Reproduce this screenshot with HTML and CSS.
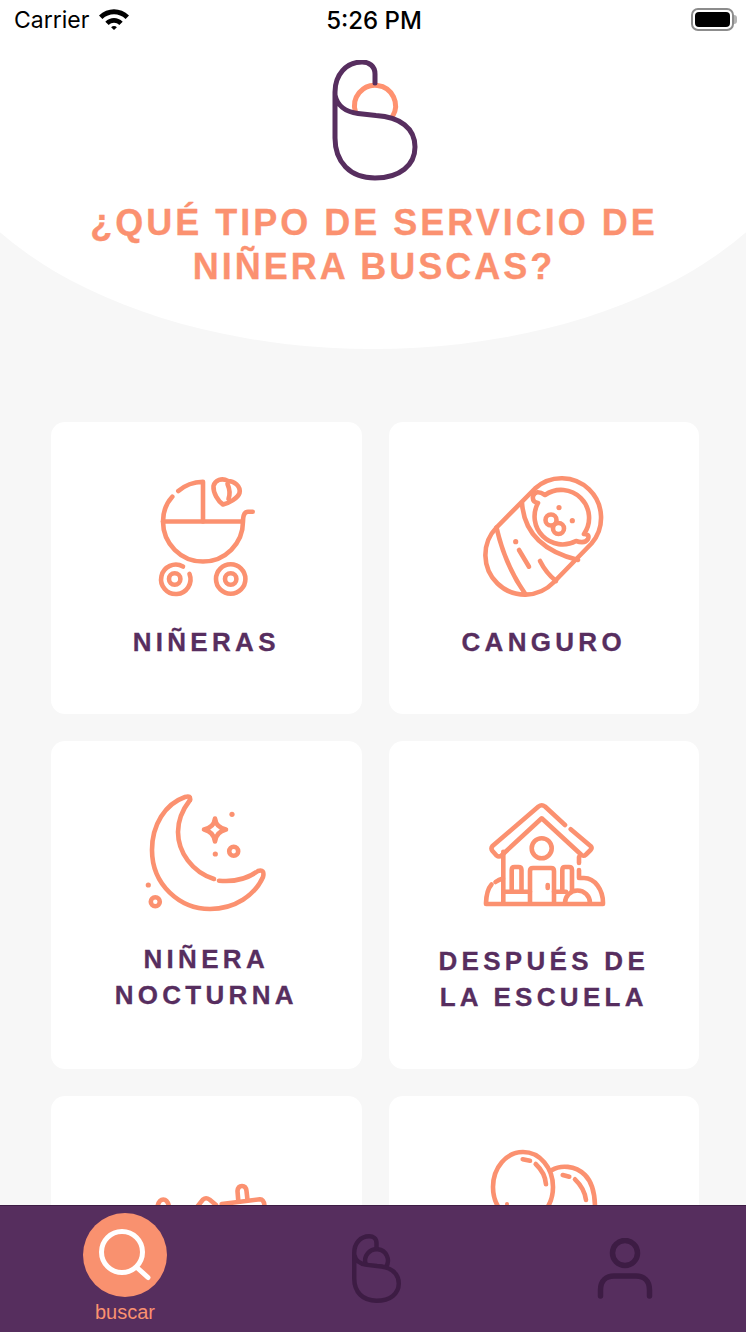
FILE: index.html
```html
<!DOCTYPE html>
<html lang="es">
<head>
<meta charset="utf-8">
<title>Buscar</title>
<link rel="stylesheet" href="styles.css">
</head>
<body>
<div class="page">
  <main class="scroll">
    <header class="hero">
      <div class="status">
        <div class="status-left">
          <span class="carrier">Carrier</span>
          <svg class="wifi" viewBox="0 0 30 22"><path d="M0 7.6C8.500-.8 21.500-.8 30 7.600L26.600 11C19.800 4.800 10.200 4.800 3.400 11Z"/><path d="M6.300 13.700C11.400 8.900 18.600 8.900 23.700 13.700L20.300 17C17.100 14.100 12.900 14.100 9.700 17Z"/><path d="M12.100 19.200C13.900 17.700 16.100 17.700 17.900 19.200L15 22Z"/></svg>
        </div>
        <span class="time">5:26 PM</span>
        <div class="battery"><span class="battery-fill"></span></div>
      </div>
      <svg class="logo" viewBox="318 60 110 121">
        <path class="logo-peach" d="M355.500 112A20.500 20.500 0 1 1 392.500 116.500"/>
        <path class="logo-plum" d="M375 83V74C375 66 369 62 362 62C346 62 335 75 335 92V138C335 162 350 178 375 178C400 178 415 165 415 147C415 128 400 117 376 115.500L358 113.500C345 112 337 105 335 95"/>
      </svg>
      <h1 class="title">¿QUÉ TIPO DE SERVICIO DE<br>NIÑERA BUSCAS?</h1>
    </header>

    <section class="grid">
      <article class="card card-short">
        <svg class="icon" viewBox="141 470 130 130">
          <path d="M163 521.500A40 40 0 0 0 243 521.500M163 521.500H243C243 515 244 511.700 248 511.700H252.700"/>
          <path d="M203 521.500V481.700C192 482 184 486 178.300 491M172.300 496.700C166.500 503 163 512 163 521.500"/>
          <path d="M213.500 486C215 480 222 477.500 228 481C234 481 241 486 239.500 493C238 498 229 503 223 504.500C218 501 213 493 213.500 486Z"/>
          <path d="M227.500 484Q231 492 228.500 499"/>
          <path d="M183 566.500A14.700 14.700 0 1 0 189.500 574"/>
          <circle cx="174.700" cy="579" r="5.700"/>
          <circle cx="230.700" cy="579" r="14.700"/>
          <circle cx="230.700" cy="579" r="5.700"/>
        </svg>
        <h2 class="card-label card-label-low">NIÑERAS</h2>
      </article>
      <article class="card card-short">
        <svg class="icon" viewBox="479 470 130 130">
          <path d="M535 488.500A39.500 39.500 0 0 1 591.500 543.500L553.500 582.500A39.500 39.500 0 0 1 496.500 527.500Z"/>
          <path d="M545 495A28 28 0 0 1 584 534Q590 534 588 539Q585 544 576 541A28 28 0 0 1 538 503Q532 502 533 496Q536 489 545 495Z"/>
          <circle class="dot" cx="559" cy="507.700" r="2.600"/>
          <circle class="dot" cx="572.300" cy="520.700" r="2.600"/>
          <circle cx="551" cy="520" r="5.500"/>
          <circle cx="558.500" cy="528.500" r="5.500"/>
          <path d="M522 503Q525 547 578 560"/>
          <path d="M496.500 527.500Q505 565 525 593.500"/>
          <path d="M540 561Q546 573 556 581"/>
          <circle class="dot" cx="515.700" cy="541.700" r="2.600"/>
          <path d="M519 550L529 566.700"/>
        </svg>
        <h2 class="card-label card-label-low">CANGURO</h2>
      </article>
      <article class="card card-tall">
        <svg class="icon" viewBox="141 789 130 130">
          <path d="M190 800Q191 795 185 797C165 804 152 825 152 850C152 885 180 909 210 909C235 909 255 895 263 877Q265 869 258 871C246 880 233 882 219 880.700"/>
          <path d="M214 879C192 872 178 852 178 832C178 820 183 809 190 800"/>
          <path d="M215 818.500Q216 827.500 226 829.500Q216 832 215 841.500Q214 832 204 829.500Q214 827.500 215 818.500Z"/>
          <circle class="dot" cx="232" cy="814.300" r="2.600"/>
          <circle class="dot" cx="215.300" cy="854" r="2.600"/>
          <circle class="dot" cx="148.300" cy="885" r="2.600"/>
          <circle cx="233.700" cy="851.300" r="4.500"/>
          <circle cx="155.300" cy="901.700" r="4.500"/>
        </svg>
        <h2 class="card-label card-label-high">NIÑERA<br>NOCTURNA</h2>
      </article>
      <article class="card card-tall">
        <svg class="icon" viewBox="479 789 130 130">
          <path d="M565 825L545 806.500Q541.700 804 538.500 806.500L492.500 846Q490.500 848.500 492.500 851L496.500 855.500Q499 857.500 501.500 855.500L541.700 818.300L581 854.500Q583.300 857 586 854.500L590.500 850Q592.500 848 590.500 846L570.700 829.300"/>
          <path d="M503.300 851.700V902M579 857V863M579 870V878"/>
          <circle cx="541.700" cy="848.300" r="10"/>
          <path d="M530 902V871Q530 868 533 868H551Q554 868 554 871V902"/>
          <path d="M547.700 885V888"/>
          <path d="M511.700 891V870Q511.700 867 514.500 867H518.500Q521.500 867 521.500 870V891"/>
          <path d="M562.300 891V870Q562.300 867 565 867H569Q572 867 572 870V891"/>
          <path d="M503.300 891.700H530M554 891.700H566"/>
          <path d="M486 904H603"/>
          <path d="M486 903Q486.500 890 491.500 884.500M495.500 882Q499 879.500 503 878.500"/>
          <path d="M565 903A12.500 12.500 0 0 1 590 903"/>
          <path d="M580 878H584C595 878 603 890 603 903"/>
        </svg>
        <h2 class="card-label card-label-low">DESPUÉS DE<br>LA ESCUELA</h2>
      </article>
      <article class="card card-tall">
        <svg class="icon" viewBox="141 1144 130 130">
          <path d="M157 1210Q158 1199.500 163.300 1199.500Q168.500 1199.500 169.500 1210"/>
          <path d="M197 1207L203 1199.500Q206 1197 209.500 1199.500L216 1205"/>
          <path d="M221.700 1204L260 1199.300Q264 1199.500 264.500 1206"/>
          <path d="M238.300 1201L237.500 1191Q238 1186 242 1186Q246 1186 246.500 1191L247.500 1200"/>
        </svg>
      </article>
      <article class="card card-tall">
        <svg class="icon" viewBox="479 1144 130 130">
          <ellipse cx="523" cy="1187" rx="30" ry="35"/>
          <path d="M552 1170C560 1165 575 1165 585 1175C592 1182 595 1195 595 1208"/>
          <path d="M522.700 1159.300L530 1160.700M535.700 1164C542 1170 545.500 1177 546 1184.300"/>
          <path d="M562.700 1175L569.300 1176.700M575 1179.300C581 1185 585 1192 586 1200"/>
          <circle class="dot" cx="507" cy="1204" r="2"/>
        </svg>
      </article>
    </section>
  </main>

  <nav class="tabbar">
    <div class="tab">
      <div class="tab-badge">
        <svg class="tab-search" viewBox="0 0 84 84"><circle cx="39" cy="39" r="20.500"/><path d="M55 55.500L65 64.500"/></svg>
      </div>
      <span class="tab-label">buscar</span>
    </div>
    <div class="tab">
      <svg class="tab-logo" viewBox="331 58 88 124">
        <path d="M355.500 112A20.500 20.500 0 1 1 392.500 116.500"/>
        <path d="M375 83V74C375 66 369 62 362 62C346 62 335 75 335 92V138C335 162 350 178 375 178C400 178 415 165 415 147C415 128 400 117 376 115.500L358 113.500C345 112 337 105 335 95"/>
      </svg>
    </div>
    <div class="tab">
      <svg class="tab-person" viewBox="0 0 60 64"><circle cx="30" cy="15" r="12.500"/><path d="M5.500 58V52C5.500 42 12 38 19 38H41C48 38 54.500 42 54.500 52V58"/></svg>
    </div>
  </nav>
</div>
</body>
</html>
```
FILE: styles.css
```css
* { box-sizing: border-box; }
html, body { margin: 0; padding: 0; }
body { background: #f7f7f7; font-family: "Liberation Sans", Arial, sans-serif; }

.page {
  width: 746px;
  height: 1332px;
  display: flex;
  flex-direction: column;
  overflow: hidden;
  background: #f7f7f7;
}
.scroll { flex: 1; min-height: 0; overflow: hidden; }

.hero {
  position: relative;
  height: 349px;
  display: flex;
  flex-direction: column;
  align-items: center;
}
.hero::before {
  content: "";
  position: absolute;
  left: -77px;
  bottom: 0;
  width: 900px;
  height: 530px;
  border-radius: 50%;
  background: #fff;
}
.hero > * { position: relative; }

.status {
  width: 100%;
  height: 40px;
  display: grid;
  grid-template-columns: 1fr auto 1fr;
  align-items: center;
  padding: 0 12px 0 14px;
  color: #000;
  font-family: Inter, "Liberation Sans", sans-serif;
}
.status-left { display: flex; align-items: center; gap: 10px; }
.carrier { font-size: 23px; }
.wifi { width: 30px; height: 22px; fill: #000; margin-top: -2px; }
.time { font-size: 24px; font-weight: 500; }
.battery {
  justify-self: end;
  width: 43px;
  height: 23px;
  margin-top: -2px;
  border: 2px solid #8c8c8c;
  border-radius: 7px;
  padding: 2px;
  position: relative;
}
.battery::after {
  content: "";
  position: absolute;
  right: -5px;
  top: 5px;
  width: 3px;
  height: 9px;
  border-radius: 0 3px 3px 0;
  background: #b5b5b5;
}
.battery-fill { display: block; height: 100%; background: #000; border-radius: 4px; }

.logo {
  width: 110px;
  height: 121px;
  margin-top: 20px;
  fill: none;
  stroke-linecap: round;
  stroke-width: 5;
}
.logo-plum { stroke: #572e5f; }
.logo-peach { stroke: #ff9270; }

.title {
  margin: 20px 0 0 2px;
  font-size: 36px;
  line-height: 44px;
  font-weight: 700;
  letter-spacing: 3px;
  text-align: center;
  color: #fb9170;
  -webkit-text-stroke: 0.3px #fb9170;
}

.grid {
  display: grid;
  grid-template-columns: 1fr 1fr;
  gap: 27px;
  margin-top: 73px;
  padding: 0 47px 0 51px;
}
.card {
  background: #fff;
  border-radius: 14px;
  padding-top: 48px;
  display: flex;
  flex-direction: column;
  align-items: center;
}
.card-short { height: 292px; }
.card-tall { height: 328px; }

.icon {
  width: 130px;
  height: 130px;
  flex: none;
  fill: none;
  stroke: #fb9170;
  stroke-width: 4.600;
  stroke-linecap: round;
  stroke-linejoin: round;
}
.icon .dot { fill: #fb9170; stroke: none; }

.card-label {
  margin: 23px 0 0;
  font-size: 26px;
  line-height: 36px;
  font-weight: 700;
  letter-spacing: 4.300px;
  text-align: center;
  color: #572e5f;
  -webkit-text-stroke: 0.3px #572e5f;
}
.card-label-low { margin-top: 24px; }
.card-label-high { margin-top: 22px; }

.tabbar {
  flex: none;
  height: 127px;
  display: grid;
  grid-template-columns: 250px 252px 246px;
  background: #562e5e;
  border-top: 1px solid #3d1c44;
}
.tab { display: flex; flex-direction: column; align-items: center; }
.tab-badge {
  width: 84px;
  height: 84px;
  margin-top: 7px;
  border-radius: 50%;
  background: #f9916f;
}
.tab-search {
  display: block;
  width: 84px;
  height: 84px;
  fill: none;
  stroke: #fff;
  stroke-width: 5;
  stroke-linecap: round;
}
.tab-label { margin-top: 3px; font-size: 20px; line-height: 24px; color: #fb9170; }
.tab-logo {
  width: 49px;
  height: 69px;
  margin-top: 28px;
  fill: none;
  stroke: #3d1c44;
  stroke-width: 8;
  stroke-linecap: round;
}
.tab-person {
  width: 60px;
  height: 64px;
  margin-top: 32px;
  fill: none;
  stroke: #3d1c44;
  stroke-width: 5.500;
  stroke-linecap: round;
}
```
